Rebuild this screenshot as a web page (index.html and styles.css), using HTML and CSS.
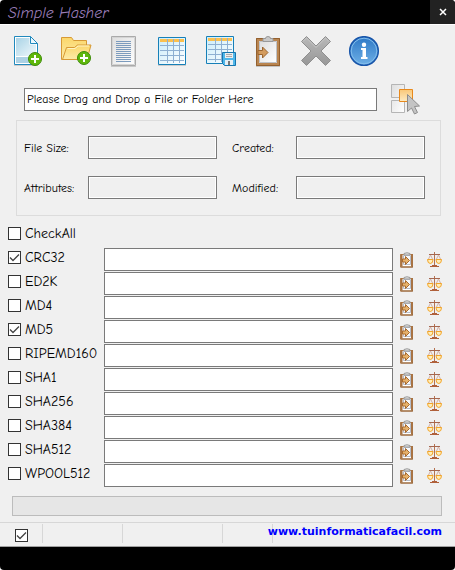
FILE: index.html
```html
<!DOCTYPE html>
<html lang="en">
<head>
<meta charset="utf-8">
<title>Simple Hasher</title>
<link rel="stylesheet" href="styles.css">
</head>
<body>
<svg class="defs" width="0" height="0" aria-hidden="true">
  <defs>
    <linearGradient id="paper" x1="0" y1="0" x2="1" y2="1"><stop offset="0" stop-color="#a9d3e6"/><stop offset="1" stop-color="#f1f9fc"/></linearGradient>
    <linearGradient id="folder" x1="0" y1="0" x2="0" y2="1"><stop offset="0" stop-color="#fbd76b"/><stop offset="1" stop-color="#fdeaa8"/></linearGradient>
    <linearGradient id="sky" x1="0" y1="0" x2="1" y2="1"><stop offset="0" stop-color="#c9ecfa"/><stop offset="1" stop-color="#fff"/></linearGradient>
    <linearGradient id="grey" x1="0" y1="0" x2="0" y2="1"><stop offset="0" stop-color="#b9b9b9"/><stop offset="1" stop-color="#979797"/></linearGradient>
    <linearGradient id="blue" x1="0" y1="0" x2="0" y2="1"><stop offset="0" stop-color="#2d78c6"/><stop offset="1" stop-color="#6fb0e6"/></linearGradient>
    <linearGradient id="sheet" x1="0" y1="0" x2="1" y2="1"><stop offset="0" stop-color="#dedede"/><stop offset="1" stop-color="#fff"/></linearGradient>
    <linearGradient id="amber" x1="0" y1="0" x2="0" y2="1"><stop offset="0" stop-color="#f9c777"/><stop offset="1" stop-color="#fdebc4"/></linearGradient>
  </defs>
  <symbol id="plus" viewBox="0 0 14 14">
    <circle cx="7" cy="7" r="6.5" fill="#5fb70b" stroke="#3d8a08"/>
    <path d="M7 3v8M3 7h8" stroke="#fff" stroke-width="2"/>
  </symbol>
  <symbol id="clip" viewBox="0 0 16 16">
    <path d="M1.500 2.500h12v12.500h-12z" fill="#fff" stroke="#bd8650"/>
    <path d="M2.500 2v12.500M13 2v12.500" stroke="#a87343" stroke-width="2"/>
    <path d="M1.500 15h12.500" stroke="#8d5d33"/>
    <path d="M4.500 3.500h7v9h-7z" fill="#f6f8fb" stroke="#b6bcc8"/>
    <path d="M5 1.500q3-1.500 6 0v1.500h-6z" fill="#e4e4e4" stroke="#999"/>
    <path d="M3.500 7h3V4.500L10.500 8.500l-4 4V10h-3z" fill="#e6b26c" stroke="#aa6b2e"/>
  </symbol>
  <symbol id="scales" viewBox="0 0 16 16">
    <path d="M7.500 0v14" stroke="#b5714f"/>
    <path d="M2 2.500h11" stroke="#a5664e"/>
    <path d="M5 13.500h5M3 14.500h9" stroke="#b0603a"/>
    <path d="M3.500 3L1 8M3.500 3L6 8M11.500 3L9 8M11.500 3L14 8" stroke="#d3b0a4" fill="none"/>
    <path d="M.5 7.500h5.500q0 4-2.700 4t-2.800-4zM9 7.500h5.500q0 4-2.700 4t-2.800-4z" fill="#ffedb8" stroke="#f2a52a"/>
  </symbol>
</svg>

<main class="window">
  <header class="titlebar">
    <h1 class="title">Simple Hasher</h1>
    <button class="close" aria-label="Close"><svg width="8" height="8" viewBox="0 0 8 8"><path d="M1 1l6 6M7 1L1 7" stroke="#fff" stroke-width="1.500"/></svg></button>
  </header>

  <nav class="toolbar">
    <button class="tool" aria-label="Add file"><svg viewBox="0 0 32 32">
      <path d="M2 29.500h24" stroke="#ccc"/>
      <path d="M2.500 .5h16l7 7v21h-23z" fill="#fff" stroke="#2089bd"/>
      <path d="M4 2h13.500v6.500H24V20H4z" fill="url(#paper)"/><path d="M4 21h20v6H4z" fill="#acd1e4"/>
      <path d="M18.500 .5v7h7z" fill="#eaf8ff" stroke="#2089bd"/>
      <use href="#plus" x="16" y="16" width="14" height="14"/></svg></button>
    <button class="tool" aria-label="Add folder"><svg viewBox="0 0 32 32">
      <path d="M1.500 23.500v-22h10l2 3h13v19z" fill="url(#folder)" stroke="#d79a36"/>
      <path d="M2.500 23.500l4-12h8l3-2.500h13.500l-4 14.500z" fill="url(#folder)" stroke="#d79a36"/>
      <path d="M7.500 12.500h7.500l3-2.500h11" fill="none" stroke="#fff3c5"/>
      <use href="#plus" x="17" y="15" width="14" height="14"/></svg></button>
    <button class="tool" aria-label="Report"><svg viewBox="0 0 32 32">
      <path d="M3 30.500h25" stroke="#c8c8c8"/>
      <path d="M3.500 .5h24v29h-24z" fill="url(#sheet)" stroke="#aaa"/>
      <path d="M4.500 1.500h22v27h-22z" fill="none" stroke="#d4d4d4"/>
      <path d="M8 5.500h15M8 7.500h15M8 9.500h15M8 11.500h15M8 13.500h15M8 15.500h15M8 17.500h15M8 19.500h15M8 21.500h15M8 23.500h15M8 25.500h15" stroke="#7c9bbd"/></svg></button>
    <button class="tool" aria-label="Table"><svg viewBox="0 0 32 32">
      <path d="M2 29.500h28" stroke="#ccc"/>
      <path d="M2.500 1.500h27v27h-27z" fill="url(#sky)" stroke="#1680b8"/>
      <path d="M4 3h24v3H4z" fill="#fbc04e"/>
      <path d="M4 9.500h24M4 14.500h24M4 19.500h24M4 24.500h24M11.500 3v24M17.500 3v24M23.500 3v24" stroke="#8eb0d2"/></svg></button>
    <button class="tool" aria-label="Save table"><svg viewBox="0 0 32 32">
      <path d="M2.500 .5h27v27h-27z" fill="url(#sky)" stroke="#1680b8"/>
      <path d="M4 2h24v3H4z" fill="#fbc04e"/>
      <path d="M4 8.500h24M4 13.500h24M4 18.500h24M4 23.500h24M11.500 2v24M17.500 2v24M23.500 2v24" stroke="#8eb0d2"/>
      <path d="M18.500 16.500h13v13h-11l-2-2z" fill="#4fb7ea" stroke="#1676ae"/>
      <path d="M21 17h8v5h-8z" fill="#eee"/><path d="M22 18.500h6M22 20.500h6" stroke="#aaa"/>
      <path d="M21 24h8v5h-8z" fill="#e5eff5"/><path d="M24 25h2v4h-2z" fill="#777"/></svg></button>
    <button class="tool" aria-label="Copy to clipboard"><svg viewBox="0 0 32 32">
      <path d="M4 30.500h24" stroke="#c4c4c4"/>
      <path d="M5.500 3.500h21v25h-21z" fill="#e8eaed" stroke="#b98550" stroke-width="3"/>
      <path d="M4.500 2.500h23v27h-23z" fill="none" stroke="#93602f"/>
      <path d="M7.500 5.500h17v21h-17z" fill="url(#sheet)" stroke="#bec2c8"/>
      <path d="M11 5.500V2.500h2.500q0-2 2.500-2t2.500 2H21v3z" fill="#c8c8c8" stroke="#999"/>
      <path d="M6 14.500h4.500v-3.500l5.500 5.500-5.500 5.500v-3.500H6z" fill="#d39b5d" stroke="#9b652f"/></svg></button>
    <button class="tool" aria-label="Clear"><svg viewBox="0 0 32 32">
      <path d="M6.500 .5l9.500 9.500 9.500-9.500 5 5-9.500 9.500 9.500 9.500-5 5-9.500-9.500-9.500 9.500-5-5 9.500-9.500L1.500 5.500z" fill="url(#grey)" stroke="#8f8f8f" stroke-linejoin="round"/>
      <path d="M3 5.500l3.500-3.500 9.500 9.500L25.500 2 29 5.500" fill="none" stroke="#c4c4c4"/></svg></button>
    <button class="tool" aria-label="Information"><svg viewBox="0 0 32 32">
      <circle cx="16" cy="15" r="14.300" fill="url(#blue)" stroke="#1956aa" stroke-width="1.500"/>
      <circle cx="16" cy="15" r="12.800" fill="none" stroke="#82bdeb"/>
      <circle cx="16" cy="8.800" r="2.200" fill="#fff"/>
      <path d="M13 12h5v9h1.500v2H13v-2h1.500v-7H13z" fill="#fff"/></svg></button>
  </nav>

  <div class="drop">
    <input class="field" type="text" aria-label="File or folder" value="Please Drag and Drop a File or Folder Here">
    <button class="tool" aria-label="Select"><svg viewBox="0 0 32 32">
      <path d="M3.500 1.500h13v13h-13zM3.500 17.500h13v12h-13z" fill="url(#sheet)" stroke="#b5b5b5"/>
      <path d="M11.500 6.500h13v12h-13z" fill="url(#amber)" stroke="#e8891c"/>
      <path d="M19.500 11.500v17l4-3.500 3 6 3-1.500-3-6 5-.5z" fill="#c4c4c4" stroke="#8d8d8d"/></svg></button>
  </div>

  <section class="details" aria-label="File details">
    <label for="size">File Size:</label><input class="field" id="size" readonly>
    <label for="created">Created:</label><input class="field" id="created" readonly>
    <label for="attributes">Attributes:</label><input class="field" id="attributes" readonly>
    <label for="modified">Modified:</label><input class="field" id="modified" readonly>
  </section>

  <section class="hashes" aria-label="Hashes">
    <div class="row"><label class="check"><input type="checkbox">CheckAll</label></div>
    <div class="row"><label class="check"><input type="checkbox" checked>CRC32</label><input class="field" aria-label="CRC32 hash"><button class="mini" aria-label="Copy CRC32"><svg><use href="#clip"/></svg></button><button class="mini" aria-label="Compare CRC32"><svg><use href="#scales"/></svg></button></div>
    <div class="row"><label class="check"><input type="checkbox">ED2K</label><input class="field" aria-label="ED2K hash"><button class="mini" aria-label="Copy ED2K"><svg><use href="#clip"/></svg></button><button class="mini" aria-label="Compare ED2K"><svg><use href="#scales"/></svg></button></div>
    <div class="row"><label class="check"><input type="checkbox">MD4</label><input class="field" aria-label="MD4 hash"><button class="mini" aria-label="Copy MD4"><svg><use href="#clip"/></svg></button><button class="mini" aria-label="Compare MD4"><svg><use href="#scales"/></svg></button></div>
    <div class="row"><label class="check"><input type="checkbox" checked>MD5</label><input class="field" aria-label="MD5 hash"><button class="mini" aria-label="Copy MD5"><svg><use href="#clip"/></svg></button><button class="mini" aria-label="Compare MD5"><svg><use href="#scales"/></svg></button></div>
    <div class="row"><label class="check"><input type="checkbox">RIPEMD160</label><input class="field" aria-label="RIPEMD160 hash"><button class="mini" aria-label="Copy RIPEMD160"><svg><use href="#clip"/></svg></button><button class="mini" aria-label="Compare RIPEMD160"><svg><use href="#scales"/></svg></button></div>
    <div class="row"><label class="check"><input type="checkbox">SHA1</label><input class="field" aria-label="SHA1 hash"><button class="mini" aria-label="Copy SHA1"><svg><use href="#clip"/></svg></button><button class="mini" aria-label="Compare SHA1"><svg><use href="#scales"/></svg></button></div>
    <div class="row"><label class="check"><input type="checkbox">SHA256</label><input class="field" aria-label="SHA256 hash"><button class="mini" aria-label="Copy SHA256"><svg><use href="#clip"/></svg></button><button class="mini" aria-label="Compare SHA256"><svg><use href="#scales"/></svg></button></div>
    <div class="row"><label class="check"><input type="checkbox">SHA384</label><input class="field" aria-label="SHA384 hash"><button class="mini" aria-label="Copy SHA384"><svg><use href="#clip"/></svg></button><button class="mini" aria-label="Compare SHA384"><svg><use href="#scales"/></svg></button></div>
    <div class="row"><label class="check"><input type="checkbox">SHA512</label><input class="field" aria-label="SHA512 hash"><button class="mini" aria-label="Copy SHA512"><svg><use href="#clip"/></svg></button><button class="mini" aria-label="Compare SHA512"><svg><use href="#scales"/></svg></button></div>
    <div class="row"><label class="check"><input type="checkbox">WPOOL512</label><input class="field" aria-label="WPOOL512 hash"><button class="mini" aria-label="Copy WPOOL512"><svg><use href="#clip"/></svg></button><button class="mini" aria-label="Compare WPOOL512"><svg><use href="#scales"/></svg></button></div>
  </section>

  <div class="progress" role="progressbar" aria-label="Progress" aria-valuenow="0"></div>

  <div class="status">
    <div class="cell"><input type="checkbox" aria-label="Enabled" checked></div>
    <div class="cell"></div>
    <div class="cell"></div>
    <div class="cell"></div>
    <a class="site" href="#">www.tuinformaticafacil.com</a>
  </div>
  <footer class="edge"></footer>
</main>
</body>
</html>
```

FILE: styles.css
```css
* { box-sizing: border-box; }

body {
  margin: 0;
  background: #fff;
  color: #000;
  font: 12px/16px "Comic Sans MS", "Comic Neue", "Noto Sans", sans-serif;
}

button { padding: 0; border: 0; background: none; }
svg { display: block; width: 100%; height: 100%; }
.defs { position: absolute; width: 0; height: 0; }

.window {
  display: flex;
  flex-direction: column;
  min-height: 100vh;
  overflow: hidden;
  border-radius: 4px;
  background: #f0f0f0;
}

.titlebar {
  display: flex;
  justify-content: space-between;
  height: 25px;
  padding-left: 8px;
  border-bottom: 1px solid #fff;
  background: #000;
}
.title {
  margin: 0;
  color: #9a7db8;
  font: italic 16px/26px "Segoe Script", "Lucida Handwriting", "Comic Neue", cursive;
}
.close {
  display: flex;
  align-items: center;
  justify-content: center;
  width: 25px;
  background: #222;
}
.close svg { width: 8px; height: 8px; }

.toolbar { display: flex; gap: 16px; padding: 11px 12px 15px; }
.tool { flex: none; width: 32px; height: 32px; }

.field {
  width: 100%;
  min-width: 0;
  height: 23px;
  padding: 0 2px;
  border: 1px solid #7a7a7a;
  border-radius: 0;
  outline: none;
  background: #fff;
  color: #000;
  font: inherit;
}
.field:read-only { background: #f0f0f0; box-shadow: inset 0 0 0 1px #fff; }

.drop {
  display: flex;
  align-items: center;
  gap: 11px;
  padding: 0 35px 0 24px;
}

.details {
  display: grid;
  grid-template-columns: 64px 1fr 79px 1fr;
  row-gap: 17px;
  align-items: center;
  margin: 5px 14px 0 16px;
  padding: 15px 15px 16px 7px;
  border: 1px solid #dcdcdc;
}
.details label:nth-of-type(even) { margin-left: 15px; }

.hashes { padding: 7px 12px 0 8px; }
.row {
  display: grid;
  grid-template-columns: 96px 1fr 34px 16px;
  height: 24px;
  padding-top: 1px;
}
.mini { width: 16px; height: 16px; margin-top: 4px; }
.field + .mini { margin-left: 6px; }

.check {
  display: flex;
  align-items: center;
  gap: 4px;
  height: 19px;
  font-size: 14px;
  white-space: nowrap;
}
input[type="checkbox"] {
  appearance: none;
  flex: none;
  width: 13px;
  height: 13px;
  margin: 0;
  border: 1px solid #333;
  background: #fff;
}
input[type="checkbox"]:checked {
  background: #fff url("data:image/svg+xml,%3Csvg xmlns='http://www.w3.org/2000/svg' viewBox='0 0 11 11'%3E%3Cpath d='M1 5.500l3 3 6-6' fill='none' stroke='%23444' stroke-width='1.300'/%3E%3C/svg%3E");
}

.progress {
  height: 20px;
  margin: 9px 13px 6px 12px;
  border: 1px solid #bcbcbc;
  background: #e6e6e6;
}

.status {
  position: relative;
  display: grid;
  grid-template-columns: 43px 80px 100px 50px;
  height: 25px;
  padding: 1px 0 3px;
  border-top: 1px solid #d7d7d7;
  border-bottom: 1px solid #a0a0a0;
}
.cell { border-right: 1px solid #d7d7d7; }
.cell:first-child { padding: 5px 0 0 15px; }
.cell input { display: block; }
.site {
  position: absolute;
  top: 1px;
  right: 13px;
  color: #00f;
  font: bold 11px/16px Verdana, "DejaVu Sans", sans-serif;
  text-decoration: none;
}

.edge { flex: 1; min-height: 23px; background: #000; }
```
